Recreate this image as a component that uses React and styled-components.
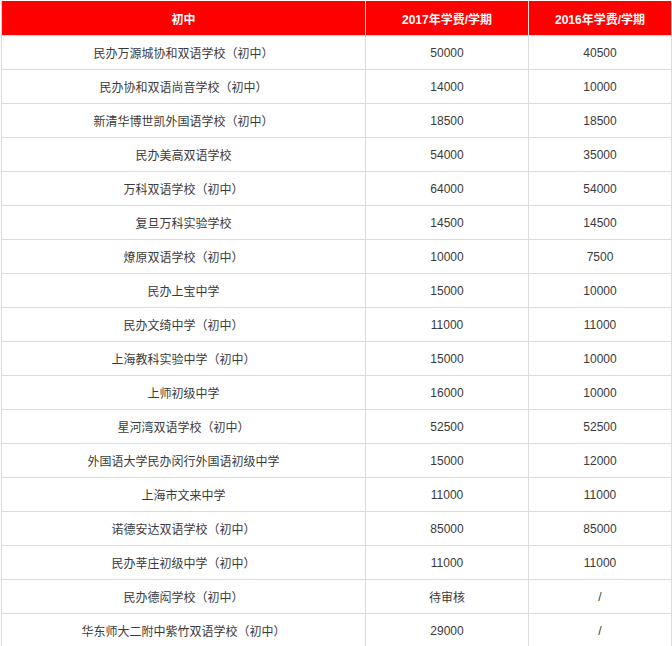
import React from "react";
import styled, { createGlobalStyle } from "styled-components";

const Global = createGlobalStyle`
  html, body { margin: 0; padding: 0; background: #fff; }
  body { font-family: "Liberation Sans", "Noto Sans CJK SC", sans-serif; }
`;

const Wrap = styled.div`
  padding: 1px 0 0 1px;
  width: 670px;
`;

const Table = styled.table`
  border-collapse: collapse;
  table-layout: fixed;
  width: 670px;
  font-size: 12px;
`;

const HeadCell = styled.th`
  background: #ff0000;
  color: #fff;
  font-weight: bold;
  height: 34px;
  padding: 0;
  text-align: center;
  border: 1px solid #dcdcdc;
  border-top: none;
`;

const Cell = styled.td`
  color: #3a3a3a;
  height: 33px;
  padding: 0;
  text-align: center;
  border: 1px solid #dcdcdc;
`;

const rows = [
  ["民办万源城协和双语学校（初中）", "50000", "40500"],
  ["民办协和双语尚音学校（初中）", "14000", "10000"],
  ["新清华博世凯外国语学校（初中）", "18500", "18500"],
  ["民办美高双语学校", "54000", "35000"],
  ["万科双语学校（初中）", "64000", "54000"],
  ["复旦万科实验学校", "14500", "14500"],
  ["燎原双语学校（初中）", "10000", "7500"],
  ["民办上宝中学", "15000", "10000"],
  ["民办文绮中学（初中）", "11000", "11000"],
  ["上海教科实验中学（初中）", "15000", "10000"],
  ["上师初级中学", "16000", "10000"],
  ["星河湾双语学校（初中）", "52500", "52500"],
  ["外国语大学民办闵行外国语初级中学", "15000", "12000"],
  ["上海市文来中学", "11000", "11000"],
  ["诺德安达双语学校（初中）", "85000", "85000"],
  ["民办莘庄初级中学（初中）", "11000", "11000"],
  ["民办德闳学校（初中）", "待审核", "/"],
  ["华东师大二附中紫竹双语学校（初中）", "29000", "/"],
];

export default function App() {
  return (
    <Wrap>
      <Global />
      <Table>
        <colgroup>
          <col style={{ width: 364 }} />
          <col style={{ width: 163 }} />
          <col style={{ width: 143 }} />
        </colgroup>
        <thead>
          <tr>
            <HeadCell>初中</HeadCell>
            <HeadCell>2017年学费/学期</HeadCell>
            <HeadCell>2016年学费/学期</HeadCell>
          </tr>
        </thead>
        <tbody>
          {rows.map((r, i) => (
            <tr key={i}>
              <Cell>{r[0]}</Cell>
              <Cell>{r[1]}</Cell>
              <Cell>{r[2]}</Cell>
            </tr>
          ))}
        </tbody>
      </Table>
    </Wrap>
  );
}
